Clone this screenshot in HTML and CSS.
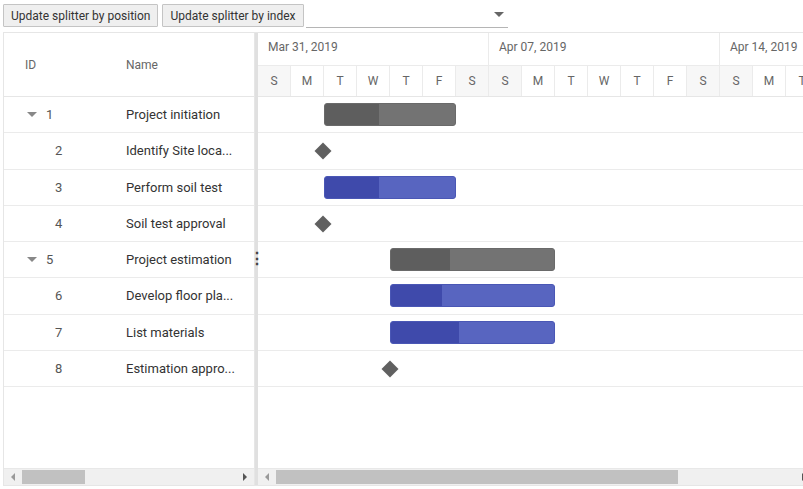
FILE: index.html
```html
<!DOCTYPE html>
<html>
<head>
<meta charset="utf-8">
<link rel="stylesheet" href="styles.css">
</head>
<body>
<div class="toolbar">
  <button class="btn">Update splitter by position</button>
  <button class="btn">Update splitter by index</button>
  <div class="dropdown"><span class="caret"></span></div>
</div>
<div class="gantt">
  <div class="left">
    <div class="lhead">
      <div class="c-id">ID</div>
      <div class="c-name">Name</div>
    </div>
    <div class="lrow"><div class="c-id parent"><span class="tri"></span>1</div><div class="c-name">Project initiation</div></div>
    <div class="lrow"><div class="c-id child">2</div><div class="c-name">Identify Site loca...</div></div>
    <div class="lrow"><div class="c-id child">3</div><div class="c-name">Perform soil test</div></div>
    <div class="lrow"><div class="c-id child">4</div><div class="c-name">Soil test approval</div></div>
    <div class="lrow"><div class="c-id parent"><span class="tri"></span>5</div><div class="c-name">Project estimation</div></div>
    <div class="lrow"><div class="c-id child">6</div><div class="c-name">Develop floor pla...</div></div>
    <div class="lrow"><div class="c-id child">7</div><div class="c-name">List materials</div></div>
    <div class="lrow"><div class="c-id child">8</div><div class="c-name">Estimation appro...</div></div>
    <div class="filler"></div>
    <div class="hscroll lscroll">
      <span class="arr arr-l"></span>
      <span class="thumb lthumb"></span>
      <span class="track"></span>
      <span class="arr arr-r"></span>
    </div>
  </div>
  <div class="splitter"><span class="handle">⋮</span></div>
  <div class="right">
    <div class="rtop">
      <div class="week">Mar 31, 2019</div>
      <div class="week">Apr 07, 2019</div>
      <div class="week">Apr 14, 2019</div>
    </div>
    <div class="rdays">
      <div class="day we">S</div><div class="day">M</div><div class="day">T</div><div class="day">W</div><div class="day">T</div><div class="day">F</div><div class="day we">S</div>
      <div class="day we">S</div><div class="day">M</div><div class="day">T</div><div class="day">W</div><div class="day">T</div><div class="day">F</div><div class="day we">S</div>
      <div class="day we">S</div><div class="day">M</div><div class="day">T</div>
    </div>
    <div class="rrow"><div class="bar parentbar" style="left:66px;width:132px"><div class="prog" style="width:54px"></div></div></div>
    <div class="rrow"><div class="ms" style="left:65px"></div></div>
    <div class="rrow"><div class="bar childbar" style="left:66px;width:132px"><div class="prog" style="width:54px"></div></div></div>
    <div class="rrow"><div class="ms" style="left:65px"></div></div>
    <div class="rrow"><div class="bar parentbar" style="left:132px;width:165px"><div class="prog" style="width:59px"></div></div></div>
    <div class="rrow"><div class="bar childbar" style="left:132px;width:165px"><div class="prog" style="width:51px"></div></div></div>
    <div class="rrow"><div class="bar childbar" style="left:132px;width:165px"><div class="prog" style="width:68px"></div></div></div>
    <div class="rrow"><div class="ms" style="left:132px"></div></div>
    <div class="filler"></div>
    <div class="hscroll rscroll">
      <span class="arr arr-l"></span>
      <span class="thumb rthumb"></span>
      <span class="track"></span>
      <span class="arr arr-r"></span>
    </div>
  </div>
</div>
</body>
</html>
```

FILE: styles.css
```css
* { box-sizing: border-box; }
body {
  margin: 0;
  font-family: Roboto, "Noto Sans", Arial, sans-serif;
  background: #fff;
  width: 803px;
  height: 489px;
  overflow: hidden;
}
.toolbar {
  display: flex;
  align-items: flex-start;
  gap: 4px;
  padding: 4px 0 0 3px;
  height: 32px;
}
.btn {
  height: 23px;
  padding: 0 7px;
  font-family: Roboto, Arial, sans-serif;
  font-size: 12px;
  color: #333;
  background: #efefef;
  border: 1px solid #c4c4c4;
  border-radius: 1px;
}
.dropdown {
  position: relative;
  width: 202px;
  height: 24px;
  margin-left: -2px;
  border-bottom: 1px solid #b5b5b5;
}
.caret {
  position: absolute;
  right: 4px;
  top: 8px;
  border-left: 5px solid transparent;
  border-right: 5px solid transparent;
  border-top: 5px solid #666;
}
.gantt {
  display: flex;
  margin-left: 3px;
  width: 810px;
  height: 454px;
  border: 1px solid #e6e6e6;
  border-right: none;
}
.left {
  width: 250px;
  display: flex;
  flex-direction: column;
  flex-shrink: 0;
}
.lhead {
  display: flex;
  align-items: center;
  height: 64px;
  flex-shrink: 0;
  border-bottom: 1px solid #e6e6e6;
  font-size: 12px;
  color: #666;
}
.lrow {
  display: flex;
  align-items: center;
  height: 36.25px;
  flex-shrink: 0;
  border-bottom: 1px solid #ebebeb;
  font-size: 13px;
  color: #333;
}
.c-id {
  width: 122px;
  padding-left: 21px;
  display: flex;
  align-items: center;
}
.lrow .c-id { color: #555; }
.c-id.parent { padding-left: 23px; }
.c-id.child { padding-left: 51px; }
.tri {
  display: inline-block;
  width: 0;
  height: 0;
  border-left: 5px solid transparent;
  border-right: 5px solid transparent;
  border-top: 5px solid #888;
  margin-right: 9px;
}
.c-name { flex: 1; }
.filler { flex: 1; }
.hscroll {
  height: 17px;
  flex-shrink: 0;
  background: #f0f0f0;
  display: flex;
  align-items: center;
  border-top: 1px solid #e8e8e8;
  padding: 0 4px;
}
.arr {
  width: 0;
  height: 0;
  border-top: 4px solid transparent;
  border-bottom: 4px solid transparent;
}
.arr-l { border-right: 4px solid #999; margin: 0 7px 0 3px; }
.arr-r { border-left: 4px solid #555; margin: 0 3px 0 7px; }
.thumb {
  height: 14px;
  background: #c1c1c1;
}
.track { flex: 1; }
.lthumb { width: 63px; }
.rthumb { width: 402px; }
.splitter {
  position: relative;
  width: 4px;
  flex-shrink: 0;
  background: #fff;
  border-left: 1px solid #e6e6e6;
}
.splitter::after {
  content: "";
  position: absolute;
  left: 0;
  top: 0;
  bottom: 0;
  width: 3px;
  background: #e0e0e0;
}
.handle {
  position: absolute;
  left: -6px;
  top: 218px;
  font-size: 16px;
  line-height: 16px;
  color: #444;
  z-index: 1;
  font-weight: bold;
}
.right {
  flex: 1;
  display: flex;
  flex-direction: column;
  overflow: hidden;
}
.rtop {
  display: flex;
  height: 33px;
  flex-shrink: 0;
  border-bottom: 1px solid #ebebeb;
}
.week {
  width: 231px;
  flex-shrink: 0;
  border-right: 1px solid #ebebeb;
  padding: 7px 0 0 10px;
  font-size: 12px;
  color: #666;
}
.rdays {
  display: flex;
  height: 31px;
  flex-shrink: 0;
  border-bottom: 1px solid #e6e6e6;
}
.day {
  width: 33px;
  flex-shrink: 0;
  border-right: 1px solid #ebebeb;
  display: flex;
  align-items: center;
  justify-content: center;
  font-size: 12px;
  color: #666;
}
.day.we { background: #f7f7f7; }
.rrow {
  position: relative;
  height: 36.25px;
  flex-shrink: 0;
  border-bottom: 1px solid #ebebeb;
}
.bar {
  position: absolute;
  top: 6px;
  height: 23px;
  border-radius: 3px;
  overflow: hidden;
}
.parentbar { background: #737373; border: 1px solid #6a6a6a; }
.parentbar .prog { background: #5e5e5e; }
.childbar { background: #5865c0; border: 1px solid #4a57b5; }
.childbar .prog { background: #3f4aab; }
.prog { height: 100%; }
.ms {
  position: absolute;
  top: 12px;
  width: 12px;
  height: 12px;
  margin-left: -6px;
  background: #606060;
  transform: rotate(45deg);
}
```
